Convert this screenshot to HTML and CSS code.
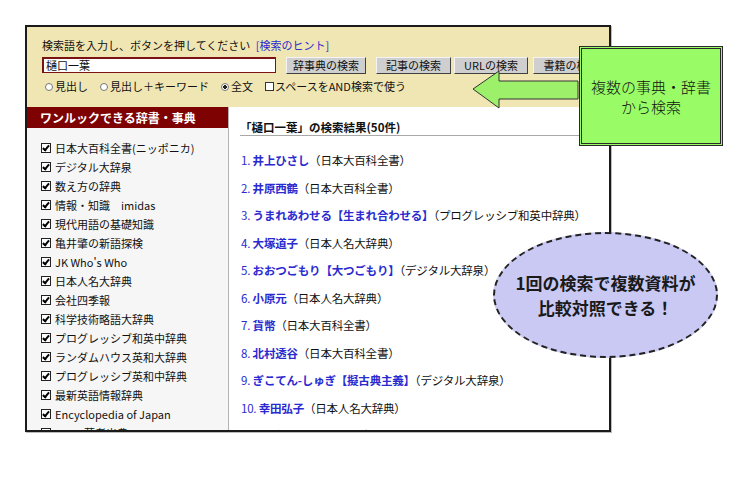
FILE: index.html
```html
<!DOCTYPE html>
<html lang="ja">
<head>
    <meta charset="UTF-8">
    <title>ワンルック検索</title>
    <link rel="stylesheet" href="styles.css">
</head>
<body>
<div class="page">

    <div class="frame">
        <!-- search form -->
        <div class="search-head">
            <div class="prompt">検索語を入力し、ボタンを押してください <a class="hint">[検索のヒント]</a></div>
            <div class="search-row">
                <div class="query">樋口一葉</div>
                <span class="btn btn-dict">辞事典の検索</span>
                <span class="btn btn-news">記事の検索</span>
                <span class="btn btn-url">URLの検索</span>
                <span class="btn btn-book">書籍の検索</span>
            </div>
            <div class="options">
                <span class="opt"><span class="radio"></span>見出し</span>
                <span class="opt"><span class="radio"></span>見出し＋キーワード</span>
                <span class="opt"><span class="radio on"></span>全文</span>
                <span class="opt"><span class="box"></span>スペースをAND検索で使う</span>
            </div>
        </div>

        <div class="body">
            <div class="sidebar">
                <div class="side-title">ワンルックできる辞書・事典</div>
                <ul class="dict-list">
                    <li><span class="cb"></span>日本大百科全書(ニッポニカ)</li>
                    <li><span class="cb"></span>デジタル大辞泉</li>
                    <li><span class="cb"></span>数え方の辞典</li>
                    <li><span class="cb"></span>情報・知識　imidas</li>
                    <li><span class="cb"></span>現代用語の基礎知識</li>
                    <li><span class="cb"></span>亀井肇の新語探検</li>
                    <li><span class="cb"></span>JK Who's Who</li>
                    <li><span class="cb"></span>日本人名大辞典</li>
                    <li><span class="cb"></span>会社四季報</li>
                    <li><span class="cb"></span>科学技術略語大辞典</li>
                    <li><span class="cb"></span>プログレッシブ和英中辞典</li>
                    <li><span class="cb"></span>ランダムハウス英和大辞典</li>
                    <li><span class="cb"></span>プログレッシブ英和中辞典</li>
                    <li><span class="cb"></span>最新英語情報辞典</li>
                    <li><span class="cb"></span>Encyclopedia of Japan</li>
                    <li><span class="cb"></span>use　著者出典</li>
                </ul>
            </div>

            <div class="results">
                <div class="results-title">「樋口一葉」の検索結果(50件)</div>
                <ol class="result-list">
                    <li><span class="num">1.</span> <a class="term">井上ひさし</a>（日本大百科全書）</li>
                    <li><span class="num">2.</span> <a class="term">井原西鶴</a>（日本大百科全書）</li>
                    <li><span class="num">3.</span> <a class="term">うまれあわせる【生まれ合わせる】</a>（プログレッシブ和英中辞典）</li>
                    <li><span class="num">4.</span> <a class="term">大塚道子</a>（日本人名大辞典）</li>
                    <li><span class="num">5.</span> <a class="term">おおつごもり【大つごもり】</a>（デジタル大辞泉）</li>
                    <li><span class="num">6.</span> <a class="term">小原元</a>（日本人名大辞典）</li>
                    <li><span class="num">7.</span> <a class="term">貨幣</a>（日本大百科全書）</li>
                    <li><span class="num">8.</span> <a class="term">北村透谷</a>（日本大百科全書）</li>
                    <li><span class="num">9.</span> <a class="term">ぎこてん-しゅぎ【擬古典主義】</a>（デジタル大辞泉）</li>
                    <li><span class="num">10.</span> <a class="term">幸田弘子</a>（日本人名大辞典）</li>
                    <li><span class="num">11.</span> <a class="term">小説</a>（日本大百科全書）</li>
                </ol>
            </div>
        </div>
    </div>

    <!-- callouts over the screenshot -->
    <svg class="arrow" width="110" height="44" viewBox="0 0 110 44">
        <polygon points="3,21 29,3 29,13 108,13 108,31 29,31 29,40" fill="#9cf06a" stroke="#333" stroke-width="1"/>
    </svg>
    <div class="note-box">複数の事典・辞書<br>から検索</div>
    <div class="bubble">1回の検索で複数資料が<br>比較対照できる！</div>

</div>
</body>
</html>
```

FILE: styles.css
```css
body {
    margin: 0;
    background-color: #fff;
    font-family: "Noto Sans CJK JP", "Noto Sans", sans-serif;
    color: #111;
}

.page {
    position: relative;
    width: 750px;
    height: 477px;
    overflow: hidden;
}

.frame {
    box-sizing: border-box;
    width: 586px;
    height: 407px;
    margin: 25px 0 0 25px;
    border: 2px solid #1a1a1a;
    box-shadow: 1px 1px 0 #bbb;
    overflow: hidden;
    display: flex;
    flex-direction: column;
}

/* search form */
.search-head {
    flex: none;
    height: 80px;
    box-sizing: border-box;
    padding: 12px 0 0 15px;
    background-color: #f0e6b3;
    font-size: 11px;
}

.prompt {
    line-height: 13px;
    white-space: nowrap;
}

.hint {
    color: #2a2ad0;
    margin-left: 3px;
}

.search-row {
    display: flex;
    margin-top: 5px;
    height: 17px;
    white-space: nowrap;
}

.query {
    box-sizing: border-box;
    width: 248px;
    height: 16px;
    background-color: #fff;
    border: 2px solid #7a1414;
    border-right-width: 1px;
    border-bottom-width: 1px;
    padding-left: 2px;
    line-height: 12px;
    font-size: 11px;
}

.btn {
    flex: none;
    box-sizing: border-box;
    height: 17px;
    line-height: 15px;
    text-align: center;
    background-color: #cfcfcf;
    border: 1px solid;
    border-color: #f4f4f4 #404040 #404040 #f4f4f4;
    font-size: 11px;
}

.btn-dict { width: 80px; margin-left: 10px; }
.btn-news { width: 75px; margin-left: 10px; }
.btn-url { width: 74px; margin-left: 3px; }
.btn-book { width: 76px; margin-left: 5px; }

.options {
    display: flex;
    margin-top: 6px;
    line-height: 13px;
    white-space: nowrap;
}

.opt {
    display: flex;
    align-items: center;
    margin-right: 12px;
}

.opt:first-child {
    margin-left: 3px;
}

.radio {
    box-sizing: border-box;
    width: 8px;
    height: 8px;
    border: 1px solid #777;
    border-radius: 50%;
    background-color: #fff;
    margin-right: 2px;
}

.radio.on {
    background: radial-gradient(circle, #222 0 1.6px, #fff 2px);
}

.box {
    box-sizing: border-box;
    width: 9px;
    height: 9px;
    border: 1px solid #333;
    background-color: #fff;
    margin-right: 1px;
}

/* sidebar + results */
.body {
    flex: 1;
    display: flex;
    min-height: 0;
}

.sidebar {
    flex: none;
    width: 201px;
    background-color: #f6f6f6;
    border-right: 1px solid #b4b4b4;
}

.side-title {
    height: 21px;
    line-height: 21px;
    padding-left: 13px;
    background-color: #7e0202;
    color: #fff;
    font-size: 12px;
    font-weight: bold;
}

.dict-list {
    list-style: none;
    margin: 0;
    padding: 10px 0 0 14px;
    font-size: 11px;
}

.dict-list li {
    display: flex;
    align-items: center;
    height: 19px;
    white-space: nowrap;
}

.cb {
    position: relative;
    flex: none;
    box-sizing: border-box;
    width: 10px;
    height: 10px;
    border: 1px solid #222;
    background-color: #fff;
    margin-right: 4px;
}

.cb::after {
    content: "";
    position: absolute;
    left: 2px;
    top: 0;
    width: 2px;
    height: 5px;
    border: solid #000;
    border-width: 0 2px 2px 0;
    transform: rotate(40deg);
}

.results {
    flex: 1;
    background-color: #fff;
    padding: 13px 0 0 11px;
}

.results-title {
    font-size: 11.5px;
    font-weight: bold;
    line-height: 14px;
    padding-bottom: 1px;
    border-bottom: 1px solid #a8a8a8;
    white-space: nowrap;
}

.result-list {
    list-style: none;
    margin: 11px 0 0;
    padding: 0;
    font-size: 11.5px;
    letter-spacing: -0.2px;
}

.result-list li {
    height: 27.5px;
    line-height: 27.5px;
    white-space: nowrap;
}

.num {
    color: #2a2ad0;
    margin-left: 1px;
}

.term {
    color: #2a2ad0;
    font-weight: bold;
}

/* callouts */
.arrow {
    position: absolute;
    left: 470px;
    top: 68px;
}

.note-box {
    position: absolute;
    left: 579px;
    top: 46px;
    box-sizing: border-box;
    width: 144px;
    height: 100px;
    border: 3px double #2a2a2a;
    background-color: #99fb66;
    display: flex;
    align-items: center;
    justify-content: center;
    text-align: center;
    font-size: 15px;
    font-weight: 300;
    line-height: 20px;
    padding-top: 2px;
}

.bubble {
    position: absolute;
    left: 493px;
    top: 232px;
    box-sizing: border-box;
    width: 225px;
    height: 126px;
    border: 2px dashed #222;
    border-radius: 50%;
    background-color: #c9c9f4;
    display: flex;
    align-items: center;
    justify-content: center;
    text-align: center;
    font-size: 17px;
    font-weight: bold;
    line-height: 25px;
    color: #1a1a1a;
}
```
